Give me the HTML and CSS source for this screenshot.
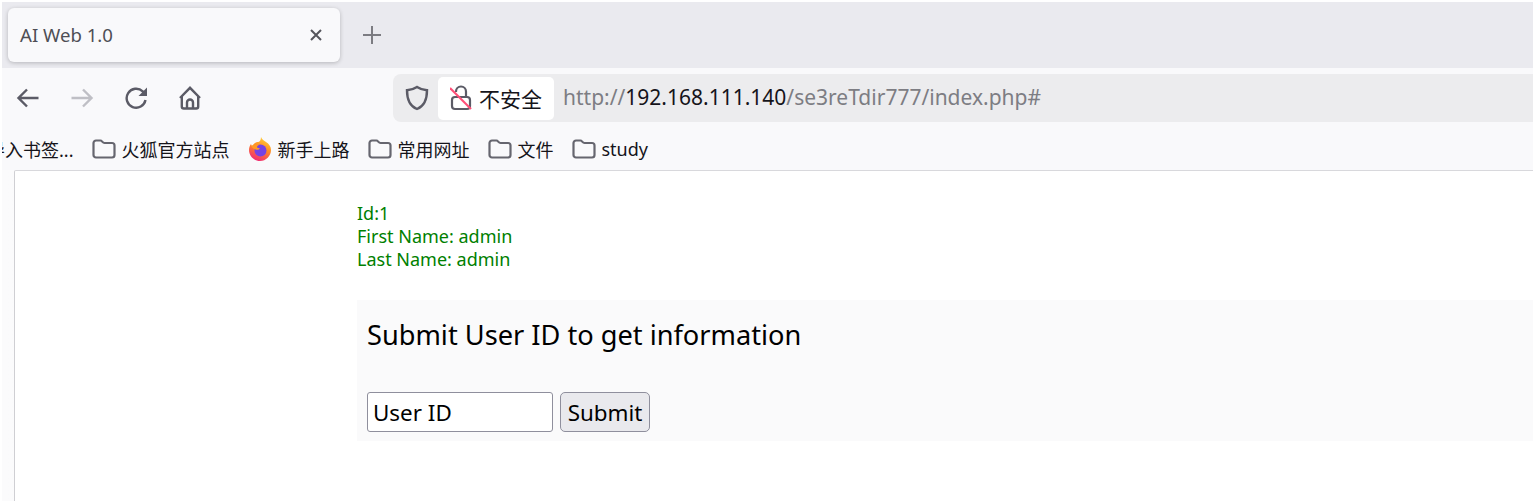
FILE: index.html
```html
<!DOCTYPE html>
<html lang="en">
<head>
    <meta charset="UTF-8">
    <meta name="viewport" content="width=device-width, initial-scale=1.0">
    <title>AI Web 1.0</title>
    <link rel="stylesheet" href="styles.css">
</head>
<body>
    <div class="browser">
        <div class="tab-bar">
            <div class="tab">
                <span class="tab-title">AI Web 1.0</span>
                <svg class="tab-close" width="14" height="14" viewBox="0 0 14 14"><path d="M2 2l10 10M12 2L2 12"/></svg>
            </div>
            <svg class="tab-new" width="20" height="20" viewBox="0 0 20 20"><path d="M10 1v18M1 10h18"/></svg>
        </div>

        <div class="toolbar">
            <div class="nav-buttons">
                <svg class="icon" width="24" height="24" viewBox="0 0 24 24"><path d="M22.500 12H2.500M11 3.500L2.500 12l8.500 8.500"/></svg>
                <svg class="icon disabled" width="24" height="24" viewBox="0 0 24 24"><path d="M1.500 12h20M13 3.500l8.500 8.500-8.500 8.500"/></svg>
                <svg class="icon reload" width="24" height="24" viewBox="0 0 24 24"><path d="M20.500 14a9.500 9.500 0 1 1-2.800-8.700l2.300 2.300"/><path class="solid" d="M22 1.500V10h-8.500z"/></svg>
                <svg class="icon" width="24" height="24" viewBox="0 0 24 24"><path d="M2 12L12 1.800 22 12M3.800 10.500v10a2 2 0 0 0 2 2h12.400a2 2 0 0 0 2-2v-10M9 22.500v-6a3 3 0 0 1 6 0v6"/></svg>
            </div>
            <div class="url-bar">
                <svg class="icon shield" width="24" height="26" viewBox="0 0 24 26"><path d="M12 2c3 2 6 3 10 3.200 0 8-1.500 15.500-10 18.800C3.500 20.700 2 13.200 2 5.200 6 5 9 4 12 2z"/></svg>
                <div class="not-secure">
                    <svg class="lock" width="22" height="26" viewBox="0 0 22 26">
                        <path d="M6 7V6.500a5 5 0 0 1 10 0V12"/>
                        <rect x="2" y="12" width="18" height="12" rx="3"/>
                        <path class="slash" d="M0 3l21 21"/>
                    </svg>
                    <span>不安全</span>
                </div>
                <div class="url"><span class="dim">http://</span>192.168.111.140<span class="dim">/se3reTdir777/index.php#</span></div>
            </div>
        </div>

        <div class="bookmarks">
            <span class="bookmark cut">导入书签...</span>
            <span class="bookmark">
                <svg class="folder" width="24" height="20" viewBox="0 0 24 20"><path d="M1.500 4a2.500 2.500 0 0 1 2.500-2.500h4.500c1.500 0 2 2.500 4 2.500H20a2.500 2.500 0 0 1 2.500 2.500V16a2.500 2.500 0 0 1-2.500 2.500H4A2.500 2.500 0 0 1 1.500 16z"/></svg>
                火狐官方站点
            </span>
            <span class="bookmark">
                <svg class="firefox" width="24" height="24" viewBox="0 0 24 24">
                    <defs>
                        <linearGradient id="fx" x1="0.7" y1="0" x2="0.3" y2="1">
                            <stop offset="0" stop-color="#ffd43a"/>
                            <stop offset="0.45" stop-color="#ff8a24"/>
                            <stop offset="1" stop-color="#f0267a"/>
                        </linearGradient>
                    </defs>
                    <path fill="url(#fx)" d="M13 0c1 2.500 3 3.500 5 5 3 2 5 4.500 5 8 0 6-5 11-11 11S1 19 1 13c0-2.500.8-4.500 2-6 .2 1 .6 1.700 1.300 2.200C5.500 6.500 8 5 10 5c1.500 0 3-1.500 3-5z"/>
                    <circle cx="12.500" cy="13.500" r="6" fill="#7542e5"/>
                    <path fill="#ff9a24" d="M3 9c2-1.500 5-2 8-1-1.500.5-2 1.500-2 2.500 1 .5 2 .5 3 1-1 1.500-3 1.500-4.500 1C6 12 4 11 3 9z"/>
                </svg>
                新手上路
            </span>
            <span class="bookmark">
                <svg class="folder" width="24" height="20" viewBox="0 0 24 20"><path d="M1.500 4a2.500 2.500 0 0 1 2.500-2.500h4.500c1.500 0 2 2.500 4 2.500H20a2.500 2.500 0 0 1 2.500 2.500V16a2.500 2.500 0 0 1-2.500 2.500H4A2.500 2.500 0 0 1 1.500 16z"/></svg>
                常用网址
            </span>
            <span class="bookmark">
                <svg class="folder" width="24" height="20" viewBox="0 0 24 20"><path d="M1.500 4a2.500 2.500 0 0 1 2.500-2.500h4.500c1.500 0 2 2.500 4 2.500H20a2.500 2.500 0 0 1 2.500 2.500V16a2.500 2.500 0 0 1-2.500 2.500H4A2.500 2.500 0 0 1 1.500 16z"/></svg>
                文件
            </span>
            <span class="bookmark">
                <svg class="folder" width="24" height="20" viewBox="0 0 24 20"><path d="M1.500 4a2.500 2.500 0 0 1 2.500-2.500h4.500c1.500 0 2 2.500 4 2.500H20a2.500 2.500 0 0 1 2.500 2.500V16a2.500 2.500 0 0 1-2.500 2.500H4A2.500 2.500 0 0 1 1.500 16z"/></svg>
                study
            </span>
        </div>

        <div class="viewport">
            <div class="page">
                <div class="result">
                    Id:1<br>
                    First Name: admin<br>
                    Last Name: admin
                </div>
                <form class="lookup" action="#">
                    <h3>Submit User ID to get information</h3>
                    <div class="lookup-row">
                        <input class="user-id" type="text" placeholder="User ID">
                        <button class="submit-btn" type="button">Submit</button>
                    </div>
                </form>
            </div>
        </div>
    </div>
</body>
</html>
```

FILE: styles.css
```css
html, body {
    height: 100%;
}

body {
    margin: 0;
    overflow: hidden;
    background: #fff;
    font-family: "Noto Sans", "Noto Sans CJK SC", sans-serif;
}

.browser {
    height: 499px;
    margin: 2px 2px 0 2px;
    display: flex;
    flex-direction: column;
    background: #f9f9fb;
}

/* tabs */
.tab-bar {
    height: 66px;
    flex: none;
    display: flex;
    align-items: center;
    background: #eaeaef;
}

.tab {
    width: 332px;
    height: 54px;
    margin: 0 0 0 6px;
    padding: 0 17px 0 12px;
    box-sizing: border-box;
    display: flex;
    align-items: center;
    justify-content: space-between;
    background: #f9f9fb;
    border-radius: 6px;
    box-shadow: 0 1px 4px rgba(0, 0, 0, 0.22);
}

.tab-title {
    margin-bottom: 2px;
    font-size: 18.6px;
    color: #4e4e55;
}

.tab-close path {
    fill: none;
    stroke: #55555c;
    stroke-width: 2;
}

.tab-new {
    margin-left: 22px;
}

.tab-new path {
    fill: none;
    stroke: #7c7c82;
    stroke-width: 2;
}

/* toolbar */
.toolbar {
    height: 55px;
    flex: none;
    display: flex;
    align-items: flex-start;
}

.nav-buttons {
    width: 391px;
    height: 60px;
    padding-left: 14px;
    box-sizing: border-box;
    display: flex;
    align-items: center;
    gap: 30px;
}

.icon {
    flex: none;
}

.icon path {
    fill: none;
    stroke: #5b5b66;
    stroke-width: 2.4;
}

.icon path.solid {
    fill: #5b5b66;
    stroke: none;
}

.icon.disabled path {
    stroke: #bfbfc5;
}

.icon.reload {
    margin: 0 -1px 0 1px;
}

.url-bar {
    flex: 1;
    height: 48px;
    margin-top: 6px;
    display: flex;
    align-items: center;
    background: #ececee;
    border-radius: 8px 0 0 8px;
}

.shield {
    margin-left: 12px;
}

.not-secure {
    width: 116px;
    height: 43px;
    margin-left: 9px;
    display: flex;
    align-items: center;
    gap: 7px;
    padding-left: 12px;
    box-sizing: border-box;
    background: #fff;
    border-radius: 5px;
    font-size: 21px;
    color: #15141a;
}

.lock path, .lock rect {
    fill: none;
    stroke: #5b5b66;
    stroke-width: 2.2;
}

.lock path.slash {
    stroke: #ff4f78;
}

.url {
    margin: 0 0 2px 9px;
    font-size: 21px;
    color: #15141a;
    white-space: nowrap;
}

.dim {
    color: #7d7d83;
}

/* bookmarks */
.bookmarks {
    height: 47px;
    padding-top: 5px;
    flex: none;
    display: flex;
    align-items: center;
    overflow: hidden;
    font-size: 18px;
    color: #15141a;
    box-sizing: border-box;
}

.bookmark {
    display: flex;
    align-items: center;
    gap: 5px;
    margin-right: 19px;
    white-space: nowrap;
}

.bookmark.cut {
    margin-left: -15px;
}

.folder path {
    fill: none;
    stroke: #66666f;
    stroke-width: 2.2;
}

/* page */
.viewport {
    flex: 1;
    padding-left: 12px;
    display: flex;
    background: linear-gradient(90deg, #fbfbfc, #f3f3f5 85%, #e6e6e9);
}

.page {
    flex: 1;
    background: #fff;
    border-top: 1px solid #d8d8dc;
    border-left: 1px solid #cfcfd3;
    border-top-left-radius: 2px;
    padding: 31px 0 0 342px;
    box-sizing: border-box;
    font-family: "Noto Sans", sans-serif;
}

.result {
    font-size: 18px;
    line-height: 23px;
    color: #008000;
}

.lookup {
    margin-top: 29px;
    padding: 0 10px 9px;
    height: 141px;
    box-sizing: border-box;
    background: #fafafb;
}

.lookup h3 {
    margin: 0;
    padding-top: 16px;
    height: 92px;
    box-sizing: border-box;
    font-size: 27.2px;
    font-weight: 400;
    line-height: 38px;
    color: #000;
}

.lookup-row {
    display: flex;
    gap: 7px;
}

.user-id {
    width: 186px;
    height: 40px;
    padding: 0 5px;
    box-sizing: border-box;
    border: 1px solid #8f8f9d;
    border-radius: 3px;
    background: #fff;
    font: 22.400px "Noto Sans", sans-serif;
}

.user-id::placeholder {
    color: #000;
    opacity: 1;
}

.submit-btn {
    width: 90px;
    height: 40px;
    padding: 0;
    border: 1px solid #8f8f9d;
    border-radius: 5px;
    background: #e9e9ed;
    font: 22.400px "Noto Sans", sans-serif;
    color: #000;
}
```
